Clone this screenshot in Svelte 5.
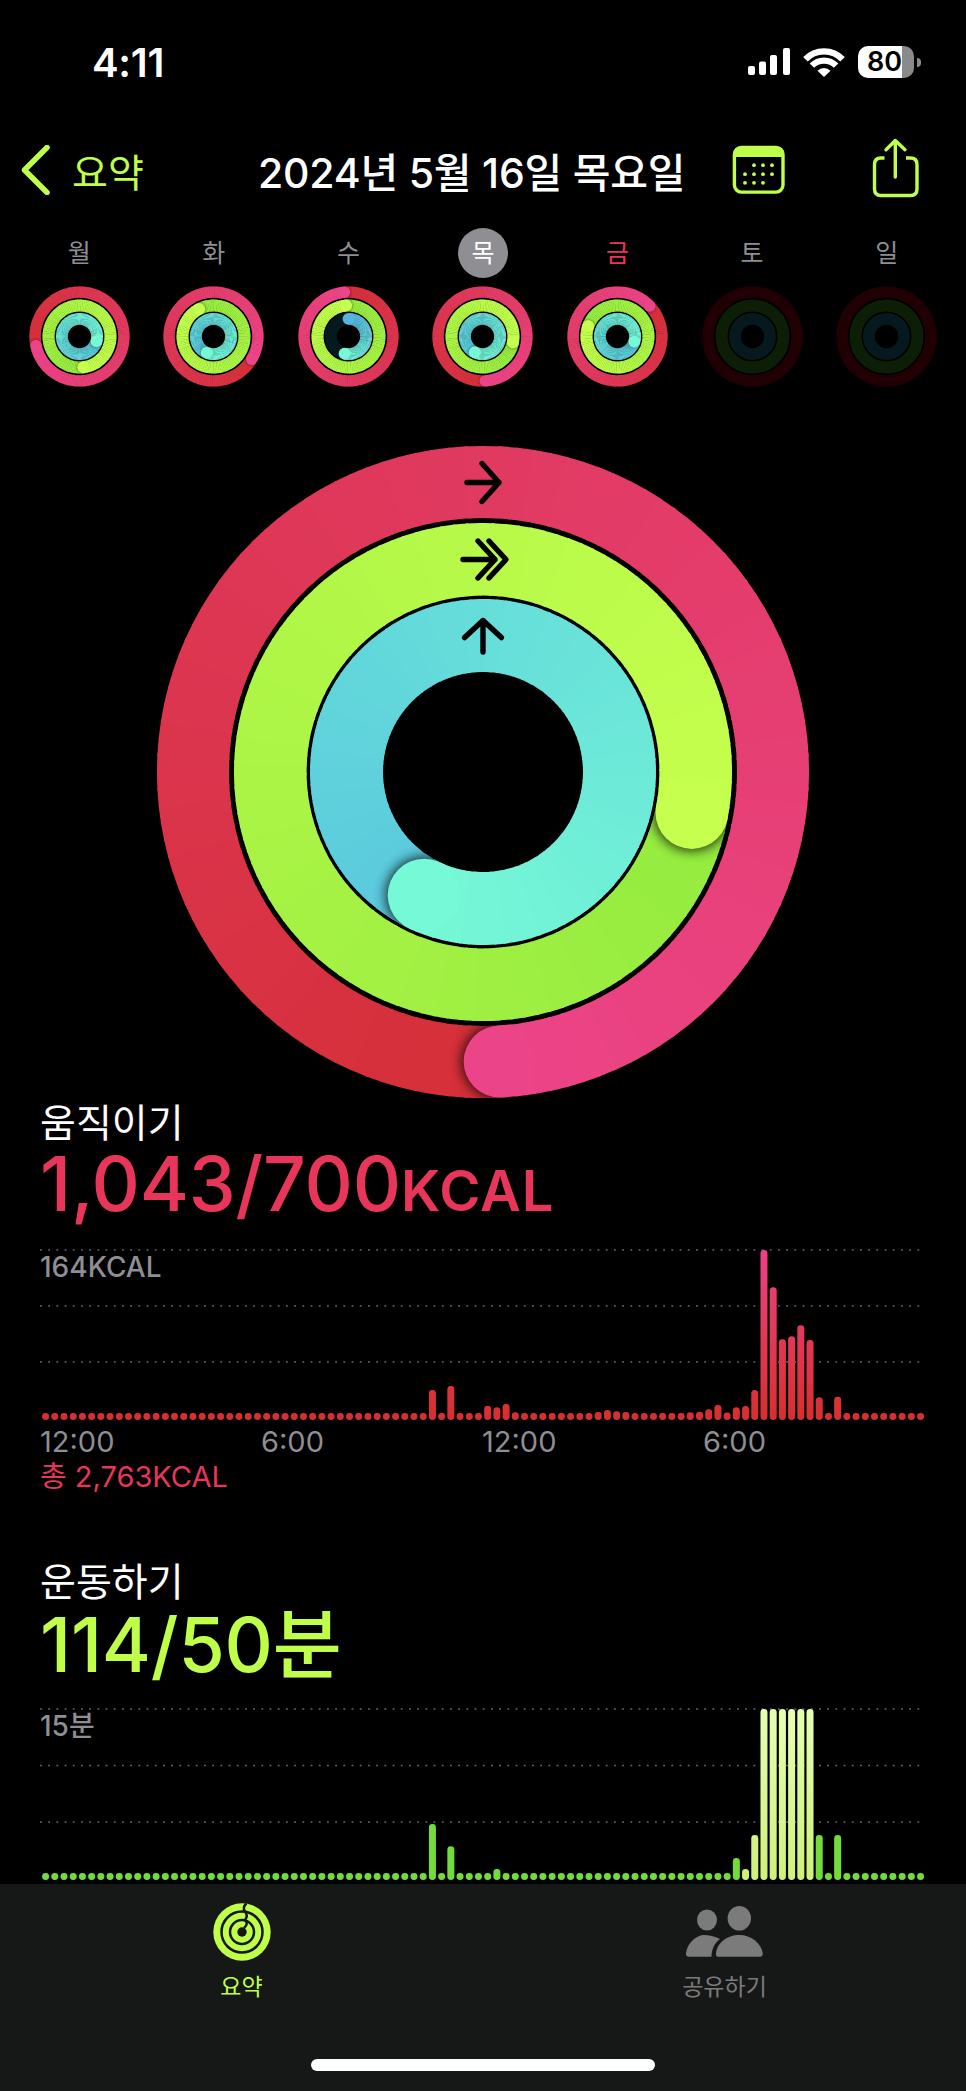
<script>
  const palette = {
    red: { from: '#d52f38', to: '#ec4488', start: '#d52f38', track: '#210004' },
    green: { from: '#94eb3f', to: '#c6ff4d', start: '#94eb3f', track: '#0c1f06' },
    blue: { from: '#5ac9dd', to: '#76f9d6', start: '#55b4e0', track: '#05191f' }
  };
  const bigSize = { red: [290, 72], green: [212.7, 72.6], blue: [136.5, 73] };
  const miniSize = { red: [44.4, 11.4], green: [31, 12], blue: [17.6, 11.8] };

  function pt(r, a) {
    const rad = ((a - 90) * Math.PI) / 180;
    return [r * Math.cos(rad), r * Math.sin(rad)];
  }
  function arc(r, a0, a1) {
    const [x0, y0] = pt(r, a0);
    const [x1, y1] = pt(r, a1);
    return `M${x0.toFixed(2)} ${y0.toFixed(2)}A${r} ${r} 0 ${a1 - a0 > 180 ? 1 : 0} 1 ${x1.toFixed(2)} ${y1.toFixed(2)}`;
  }
  function mix(c0, c1, t) {
    const ch = (c, i) => parseInt(c.slice(1 + i * 2, 3 + i * 2), 16);
    const out = [0, 1, 2].map((i) => Math.round(ch(c0, i) + (ch(c1, i) - ch(c0, i)) * t));
    return `rgb(${out.join(',')})`;
  }

  let uid = 0;
  function makeRing(key, [r, w], value) {
    const p = palette[key];
    const ring = { key, r, w, track: p.track, id: `ring-${uid++}`, base: [], over: [], cap: null };
    if (value == null) return ring;
    const partial = typeof value === 'object';
    const end = partial ? value.end : value;
    const a0 = partial ? value.start : end - 360;
    const from = partial ? p.start : p.from;
    const step = 3;
    for (let a = a0; a < end; a += step) {
      const t = (a - a0) / (end - a0);
      const seg = { d: arc(r, a, Math.min(a + step + 0.6, end)), color: mix(from, p.to, t) };
      if (!partial && a > end - 100) ring.over.push(seg);
      else ring.base.push(seg);
    }
    const [cx, cy] = pt(r, end);
    ring.cap = { cx, cy, color: p.to, shadow: !partial };
    if (partial) {
      const [sx, sy] = pt(r, a0);
      ring.startCap = { cx: sx, cy: sy, color: from };
    }
    return ring;
  }
  function makeSet(size, v) {
    return ['red', 'green', 'blue'].map((k) => makeRing(k, size[k], v ? v[k] : null));
  }

  const days = [
    { label: '월', rings: makeSet(miniSize, { red: 258.3, green: 173, blue: 106 }) },
    { label: '화', rings: makeSet(miniSize, { red: 121, green: 332.6, blue: 203 }) },
    { label: '수', rings: makeSet(miniSize, { red: 355, green: 355.6, blue: { start: 0, end: 193 } }) },
    { label: '목', current: true, rings: makeSet(miniSize, { red: 176.7, green: 101, blue: 206.5 }) },
    { label: '금', today: true, rings: makeSet(miniSize, { red: 46.8, green: 289.7, blue: 107.4 }) },
    { label: '토', rings: makeSet(miniSize, null) },
    { label: '일', rings: makeSet(miniSize, null) }
  ];
  const bigRings = makeSet(bigSize, { red: 176.7, green: 101, blue: 205.5 });

  function bars(values, dot, base) {
    return Array.from({ length: 96 }, (_, i) => {
      const h = values[i] ?? dot;
      return { x: 45.6 + i * 9.21 - 3.5, y: base - h, h, i };
    });
  }
  const moveBars = bars({
    42: 30, 44: 34, 48: 14.3, 49: 12.7, 50: 16, 51: 7.7, 60: 8, 61: 10, 62: 8.7, 63: 8,
    70: 7.7, 71: 8.3, 72: 10.7, 73: 15, 74: 7.4, 75: 12.7, 76: 14, 77: 30, 78: 170, 79: 132.7,
    80: 80.7, 81: 83.7, 82: 94.7, 83: 80, 84: 22.7, 86: 23.3
  }, 7, 174);
  const exerciseBars = bars({
    42: 56, 44: 33.7, 49: 11, 75: 22, 76: 11, 77: 45, 78: 171, 79: 171, 80: 171, 81: 171,
    82: 171, 83: 171, 84: 45, 86: 45
  }, 7, 175);
  const isLight = (i) => i >= 76 && i <= 83;
  const timeLabels = ['12:00', '6:00', '12:00', '6:00'];
  const calendarDots = [
    [754, 166.7], [763, 166.7], [772, 166.7],
    [745, 175.7], [754, 175.7], [763, 175.7], [772, 175.7],
    [745, 184.3], [754, 184.3], [763, 184.3]
  ];
</script>

{#snippet activityRings(rings, half)}
  <svg class="rings" width={half * 2} height={half * 2} viewBox="{-half} {-half} {half * 2} {half * 2}">
    {#each rings as ring}
      <circle r={ring.r} fill="none" stroke={ring.track} stroke-width={ring.w} />
      {#if ring.startCap}
        <circle cx={ring.startCap.cx} cy={ring.startCap.cy} r={ring.w / 2} fill={ring.startCap.color} />
      {/if}
      {#each ring.base as seg}
        <path d={seg.d} fill="none" stroke={seg.color} stroke-width={ring.w} />
      {/each}
      {#if ring.cap?.shadow}
        <defs>
          <clipPath id="{ring.id}-clip">
            <path clip-rule="evenodd" d="M{-ring.r - ring.w / 2} 0a{ring.r + ring.w / 2} {ring.r + ring.w / 2} 0 1 0 {2 * ring.r + ring.w} 0a{ring.r + ring.w / 2} {ring.r + ring.w / 2} 0 1 0 {-2 * ring.r - ring.w} 0ZM{-ring.r + ring.w / 2} 0a{ring.r - ring.w / 2} {ring.r - ring.w / 2} 0 1 0 {2 * ring.r - ring.w} 0a{ring.r - ring.w / 2} {ring.r - ring.w / 2} 0 1 0 {-2 * ring.r + ring.w} 0Z" />
          </clipPath>
          <filter id="{ring.id}-blur" x="-60%" y="-60%" width="220%" height="220%">
            <feGaussianBlur stdDeviation={ring.w * 0.08} />
          </filter>
        </defs>
        <g clip-path="url(#{ring.id}-clip)">
          <circle cx={ring.cap.cx} cy={ring.cap.cy} r={ring.w / 2 + ring.w * 0.03} fill="#000" opacity={half > 100 ? 0.75 : 0.45} filter="url(#{ring.id}-blur)" />
        </g>
      {/if}
      {#each ring.over as seg}
        <path d={seg.d} fill="none" stroke={seg.color} stroke-width={ring.w} />
      {/each}
      {#if ring.cap}
        <circle cx={ring.cap.cx} cy={ring.cap.cy} r={ring.w / 2} fill={ring.cap.color} />
      {/if}
    {/each}
    {#if half > 100}
      <g class="arrow">
        <path d="M-16 -289.5H16M-1 -308.5L16 -289.5L-1 -270.5" />
        <path d="M-20 -212.5H12M-5 -231L12 -212.5L-5 -194M6 -231L23 -212.5L6 -194" />
        <path d="M0 -120V-151.5M-18.4 -134.4L0 -151.5L18.4 -134.4" />
      </g>
    {/if}
  </svg>
{/snippet}

<div class="page">
  <div class="status">
    <span class="time">4:11</span>
    <div class="status-right">
      <svg class="signal" width="42" height="28" viewBox="0 0 42 28" fill="#fff">
        <rect x="0" y="18" width="7" height="9" rx="2" />
        <rect x="11" y="13.5" width="7" height="13.5" rx="2" />
        <rect x="22" y="7" width="7" height="20" rx="2" />
        <rect x="35" y="0" width="7" height="27" rx="2" />
      </svg>
      <svg class="wifi" width="42" height="29" viewBox="-20 -27.6 40 27.6">
        <path d="M-17.7 -16.9A24.5 24.5 0 0 1 17.7 -16.9" fill="none" stroke="#fff" stroke-width="6" />
        <path d="M-11.5 -10.8A16 16 0 0 1 11.5 -10.8" fill="none" stroke="#fff" stroke-width="6" />
        <path d="M0 0L-6.2 -6A9 9 0 0 1 6.2 -6Z" fill="#fff" />
      </svg>
      <div class="battery">
        <div class="battery-body"><span>80</span></div>
        <div class="battery-nub"></div>
      </div>
    </div>
  </div>

  <nav class="nav">
    <svg class="chevron" width="30" height="50" viewBox="0 0 30 50">
      <path d="M26 2.500L3.500 25L26 47.500" fill="none" stroke="#bfff4a" stroke-width="5.500" stroke-linecap="round" stroke-linejoin="round" />
    </svg>
    <span class="back-label">요약</span>
    <h1 class="nav-title">2024년 5월 16일 목요일</h1>
    <svg class="calendar" width="54" height="50" viewBox="732 146.5 54 50">
      <rect x="734.4" y="149" width="48.6" height="44.6" rx="7" fill="none" stroke="#bfff4a" stroke-width="3.4" />
      <path d="M734 156Q734 148 741 148H776Q784 148 784 156V158.5H734Z" fill="#bfff4a" />
      {#each calendarDots as [cx, cy]}
        <circle {cx} {cy} r="1.9" fill="#bfff4a" />
      {/each}
    </svg>
    <svg class="share" width="50" height="62" viewBox="871.5 139 50 62">
      <path d="M885 159H881.5Q875 159 875 165.500V190Q875 196.500 881.500 196.500H911Q917.500 196.500 917.500 190V165.500Q917.500 159 911 159H906.500" fill="none" stroke="#bfff4a" stroke-width="3.4" />
      <path d="M895.800 178V142.500M886.500 150.700L895.800 141.500L905.500 150.700" fill="none" stroke="#bfff4a" stroke-width="3.4" stroke-linecap="round" stroke-linejoin="round" />
    </svg>
  </nav>

  <div class="week">
    {#each days as day}
      <div class="day">
        <span class="day-label" class:current={day.current} class:today={day.today}>{day.label}</span>
        {@render activityRings(day.rings, 50.5)}
      </div>
    {/each}
  </div>

  <div class="hero">
    {@render activityRings(bigRings, 330)}
  </div>

  <section class="metric move">
    <h2>움직이기</h2>
    <p class="value">1,043/700<small>KCAL</small></p>
    <div class="chart">
      <svg width="966" height="178" viewBox="0 0 966 178">
        <defs>
          <linearGradient id="move-grad" gradientUnits="userSpaceOnUse" x1="0" y1="4" x2="0" y2="174">
            <stop offset="0" stop-color="#ee4088" />
            <stop offset="0.45" stop-color="#e23a5c" />
            <stop offset="1" stop-color="#d62f2f" />
          </linearGradient>
        </defs>
        {#each [4, 60, 116] as y}
          <line class="grid" x1="40" x2="925" y1={y} y2={y} />
        {/each}
        {#each moveBars as b}
          <rect x={b.x} y={b.y} width="7" height={b.h} rx="3.4" fill="url(#move-grad)" />
        {/each}
      </svg>
      <span class="chart-max">164KCAL</span>
    </div>
    <div class="axis">
      {#each timeLabels as t}<span>{t}</span>{/each}
    </div>
    <p class="total">총 2,763KCAL</p>
  </section>

  <section class="metric exercise">
    <h2>운동하기</h2>
    <p class="value">114/50분</p>
    <div class="chart">
      <svg width="966" height="179" viewBox="0 0 966 179">
        <defs>
          <linearGradient id="light-grad" gradientUnits="userSpaceOnUse" x1="0" y1="4" x2="0" y2="175">
            <stop offset="0" stop-color="#e6ffb2" />
            <stop offset="1" stop-color="#cff07a" />
          </linearGradient>
        </defs>
        {#each [4, 60.5, 117] as y}
          <line class="grid" x1="40" x2="925" y1={y} y2={y} />
        {/each}
        {#each exerciseBars as b}
          <rect x={b.x} y={b.y} width="7" height={b.h} rx="3.4" fill={isLight(b.i) ? 'url(#light-grad)' : '#74db3c'} />
        {/each}
      </svg>
      <span class="chart-max">15분</span>
    </div>
  </section>

  <footer class="tabbar">
    <div class="tabs">
      <div class="tab active">
        <svg width="60" height="60" viewBox="-30 -30 60 60">
          <circle r="28.700" fill="#bfff4a" />
          <g fill="none" stroke="#161616" stroke-width="2.500">
            <circle r="20.500" />
            <circle r="12" />
            <path d="M4.500 -28.500Q0 -24.500 3 -20.500Q6.500 -16 3 -12Q7 -8.500 2 -4" />
          </g>
          <circle r="4.700" fill="#161616" />
        </svg>
        <span>요약</span>
      </div>
      <div class="tab">
        <svg width="80" height="60" viewBox="684 1902 80 60" fill="#7b7b7b">
          <ellipse cx="706" cy="1920" rx="10" ry="10.500" />
          <ellipse cx="738.300" cy="1918.300" rx="11.700" ry="12.300" />
          <path d="M717 1956.700H759Q762 1956.700 761.700 1953C760 1943 750 1935 738.300 1935C726 1935 716 1943 715 1953Q714.700 1956.700 717 1956.700Z" />
          <path d="M687.500 1956.700H710.500C710.500 1949 714 1942.500 719 1939C714 1936.500 708 1935 702 1935C693 1936.500 686.500 1944 685 1953Q684.700 1956.700 687.500 1956.700Z" />
        </svg>
        <span>공유하기</span>
      </div>
    </div>
    <div class="home-indicator"></div>
  </footer>
</div>

<style>
  :global(body) {
    background: #000;
  }
  .page {
    width: 966px;
    height: 2091px;
    background: #000;
    color: #fff;
    display: flex;
    flex-direction: column;
    overflow: hidden;
    font-family: Inter, 'Noto Sans CJK KR', sans-serif;
  }

  .status {
    height: 124px;
    flex: none;
    display: flex;
    align-items: center;
    justify-content: space-between;
    padding: 0 45px 0 92px;
  }
  .time {
    font-size: 40px;
    font-weight: 600;
    letter-spacing: -0.3px;
  }
  .status-right {
    display: flex;
    align-items: center;
  }
  .signal {
    margin-right: 13px;
  }
  .wifi {
    margin-right: 13px;
  }
  .battery {
    display: flex;
    align-items: center;
    gap: 3px;
  }
  .battery-body {
    width: 56px;
    height: 32px;
    border-radius: 10px;
    background: linear-gradient(90deg, #fff 44px, #8a8a8a 44px);
    color: #000;
    font-size: 27px;
    font-weight: 600;
    line-height: 32px;
    padding-left: 9px;
    box-sizing: border-box;
  }
  .battery-nub {
    width: 4px;
    height: 9px;
    border-radius: 0 4px 4px 0;
    background: #8a8a8a;
  }

  .nav {
    height: 92px;
    flex: none;
    display: flex;
    align-items: center;
    padding-left: 21px;
  }
  .chevron {
    flex: none;
  }
  .back-label {
    margin-left: 21px;
    width: 72px;
    color: #bfff4a;
    font-size: 39px;
    white-space: nowrap;
  }
  .nav-title {
    margin: 0 0 0 114px;
    width: 423px;
    flex: none;
    font-size: 41px;
    font-weight: 500;
    letter-spacing: -0.2px;
    white-space: nowrap;
  }
  .calendar {
    flex: none;
    margin-left: 51px;
  }
  .share {
    flex: none;
    margin-left: 85px;
    margin-top: -2px;
  }

  .week {
    flex: none;
    margin-top: 12px;
    padding: 0 12px;
    display: grid;
    grid-template-columns: repeat(7, 1fr);
  }
  .day {
    display: flex;
    flex-direction: column;
    align-items: center;
    gap: 8px;
  }
  .day-label {
    width: 50px;
    height: 50px;
    border-radius: 50%;
    display: flex;
    align-items: center;
    justify-content: center;
    font-size: 25px;
    padding-bottom: 4px;
    box-sizing: border-box;
    color: #8e8e93;
  }
  .day-label.current {
    background: #8e8e93;
    color: #fff;
  }
  .day-label.today {
    color: #e8365a;
  }
  .rings {
    display: block;
    flex: none;
  }
  .arrow path {
    fill: none;
    stroke: #000;
    stroke-width: 5.4;
    stroke-linecap: round;
    stroke-linejoin: round;
  }

  .hero {
    flex: none;
    margin-top: 55px;
    display: flex;
    justify-content: center;
  }

  .metric {
    flex: none;
  }
  .metric h2 {
    margin: -1px 0 1px;
    padding-left: 40px;
    font-size: 39px;
    font-weight: 400;
    line-height: 44px;
  }
  .value {
    margin: 0;
    padding-left: 40px;
    font-size: 75px;
    font-weight: 500;
    letter-spacing: -0.2px;
    line-height: 76px;
    height: 76px;
    white-space: nowrap;
  }
  .value small {
    font-size: 56px;
    font-weight: 600;
    letter-spacing: 1px;
  }
  .move .value,
  .total {
    color: #e8365a;
  }
  .exercise {
    margin-top: 67px;
  }
  .exercise .value {
    color: #bfff4a;
    margin-top: 3px;
  }
  .chart {
    position: relative;
    margin-top: 24px;
    height: 178px;
  }
  .exercise .chart {
    margin-top: 22px;
    height: 179px;
  }
  .chart svg {
    display: block;
  }
  .grid {
    stroke: #6a6a6a;
    stroke-width: 1.6;
    stroke-dasharray: 1.8 6.400;
  }
  .chart-max {
    position: absolute;
    left: 40px;
    top: 5px;
    font-size: 28px;
    font-weight: 500;
    color: #8e8e93;
    line-height: 32px;
  }
  .axis {
    display: grid;
    grid-template-columns: repeat(4, 221px);
    padding-left: 40px;
    margin-top: 1px;
    font-size: 29px;
    line-height: 34px;
    color: #8e8e93;
  }
  .total {
    margin: 1px 0 0;
    padding-left: 40px;
    font-size: 29px;
    line-height: 34px;
  }

  .tabbar {
    flex: 1;
    background: #161717;
    display: flex;
    flex-direction: column;
    position: relative;
  }
  .tabs {
    display: grid;
    grid-template-columns: 1fr 1fr;
    padding-top: 18px;
  }
  .tab {
    display: flex;
    flex-direction: column;
    align-items: center;
    gap: 9px;
    color: #7b7b7b;
    font-size: 23px;
    line-height: 32px;
  }
  .tab.active {
    color: #bfff4a;
  }
  .tab svg {
    display: block;
  }
  .home-indicator {
    position: absolute;
    left: 311px;
    bottom: 20px;
    width: 344px;
    height: 12px;
    border-radius: 6px;
    background: #fff;
  }
</style>
